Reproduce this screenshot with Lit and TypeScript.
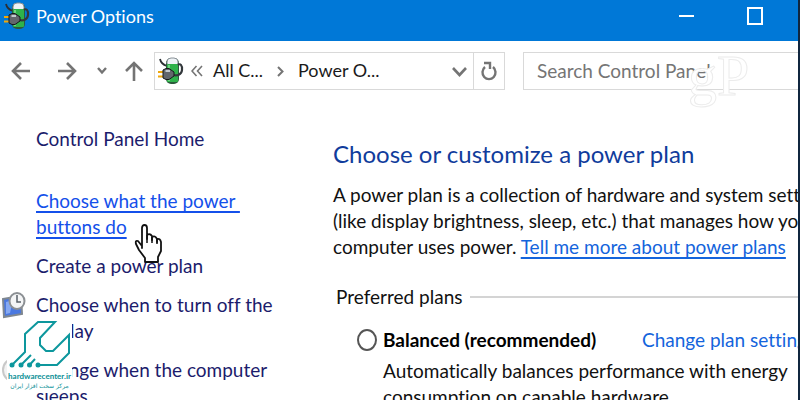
import { LitElement, html, css, svg } from "lit";
import { customElement } from "lit/decorators.js";

const battery = svg`
  <path d="M2 2Q3 7 9 9" stroke="#2b2f33" stroke-width="1.800" fill="none"/>
  <rect x="8" y="1" width="13" height="26" rx="5" fill="#2c5a3c"/>
  <rect x="9" y="1" width="11" height="9" rx="4" fill="#eef3f6" stroke="#8a9298"/>
  <rect x="9" y="7" width="11" height="18" rx="1" fill="#2eb24a"/>
  <path d="M11 8V24" stroke="#86dd95" stroke-width="1.500"/>
  <path d="M15 18C19 19 23.500 18 24 13C24.500 8 22 6 20 8" stroke="#33383c" stroke-width="2.200" fill="none"/>
  <path d="M0 15H6M0 19.500H6" stroke="#f0a80c" stroke-width="2"/>
  <path d="M5 13L8 11.500H11L16 15V19L11 22.500H8L5 21Z" fill="#62666c" stroke="#15181a"/>
  <path d="M7.500 14H12" stroke="#c5cad0" stroke-width="2"/>`;

@customElement("app-root")
export class AppRoot extends LitElement {
  static styles = css`
    :host {
      display: block;
      font: 19px/26px Lato, "Open Sans", sans-serif;
      font-variant-ligatures: none;
      color: #111;
    }
    * { box-sizing: border-box; }
    .window {
      position: relative;
      height: 100vh;
      overflow: hidden;
      background: #fff;
      border-right: 2px solid #10263f;
    }
    button {
      border: 0;
      padding: 0;
      background: none;
      font: inherit;
      color: inherit;
      display: flex;
      align-items: center;
    }
    svg { display: block; }
    .titlebar {
      display: flex;
      align-items: center;
      height: 41px;
      padding: 0 35px 10px 4px;
      background: #0078d7;
      color: #fff;
    }
    .titlebar h1 {
      flex: 1;
      margin: 0;
      padding-left: 6px;
      font-size: 18px;
      font-weight: 400;
    }
    .controls { display: flex; gap: 52px; }
    .toolbar {
      display: flex;
      align-items: center;
      padding: 11px 0 0 11px;
      color: #747474;
    }
    .arrows { display: flex; align-items: center; width: 143px; gap: 25px; }
    .arrows .recent { margin: 0 -7px 0 -6px; }
    .address {
      display: flex;
      align-items: center;
      width: 351px;
      height: 38px;
      padding-left: 3px;
      border: 1px solid #d9d9d9;
    }
    .crumb { color: #1a1a1a; font-size: 18px; padding-bottom: 3px; }
    .first { width: 64px; margin-left: 10px; }
    .second { flex: 1; margin-left: 14px; }
    .chevrons { margin-left: 7px; }
    .refresh {
      width: 31px;
      height: 36px;
      margin-left: 6px;
      justify-content: center;
      border-left: 1px solid #d9d9d9;
    }
    .search {
      flex: 1;
      min-width: 0;
      height: 38px;
      margin-left: 18px;
      padding: 0 0 2px 13px;
      border: 1px solid #d9d9d9;
      border-right: 0;
      border-radius: 0;
      background: #fff;
      font: inherit;
      outline: 0;
    }
    .search::placeholder { color: #757575; opacity: 1; }
    .watermark {
      position: absolute;
      left: 688px;
      top: 47px;
      font: 58px/58px "Liberation Serif", serif;
      color: #fff;
      -webkit-text-stroke: 1px #ececec;
      pointer-events: none;
    }
    .body { display: flex; padding-top: 36px; }
    .side {
      flex: none;
      width: 333px;
      padding-left: 36px;
      display: flex;
      flex-direction: column;
      align-items: flex-start;
      gap: 13px;
    }
    .side a { color: #1c1c6c; text-decoration: none; white-space: nowrap; }
    .side .home { margin-bottom: 23px; }
    .side .hot {
      color: #1450ea;
      text-decoration: underline;
      text-decoration-thickness: 2px;
      text-underline-offset: 3px;
    }
    .task { position: relative; }
    .task svg { position: absolute; right: 100%; top: 0; margin-right: 10px; }
    main { flex: 1; min-width: 0; padding-top: 12px; white-space: nowrap; }
    h2 { margin: 0 0 12px; font-size: 24px; line-height: 32px; font-weight: 400; color: #103c9c; }
    p { margin: 0; }
    .blue { color: #1464dc; text-decoration: none; }
    .more {
      text-decoration: underline;
      text-decoration-thickness: 2px;
      text-underline-offset: 3px;
    }
    .plans { padding-left: 3px; }
    .legend { display: flex; align-items: center; gap: 8px; margin: 24px 0 17px; }
    .legend::after { content: ""; flex: 1; height: 2px; background: #d4d4d4; }
    .plan { display: grid; grid-template-columns: 26px 259px 1fr; padding-left: 21px; align-items: center; }
    .plan input {
      appearance: none;
      width: 20px;
      height: 22px;
      margin: 0;
      border: 2px solid #555;
      border-radius: 50%;
      background: #fff;
    }
    .plan label { font-weight: 700; color: #000; }
    .plan p { grid-column: 2 / -1; margin-top: 5px; }
    .cursor { position: absolute; left: 134px; top: 224px; }
    .brand {
      position: absolute;
      left: 7px;
      top: 318px;
      width: 65px;
      height: 75px;
      background: #fff;
      color: #0a8f96;
      text-align: center;
      white-space: nowrap;
    }
    .brand div { font: 700 8px/8px Lato, sans-serif; }
    .brand .fa { font: 6px/12px "DejaVu Sans", sans-serif; font-variant-ligatures: normal; }
  `;

  render() {
    return html`
      <div class="window">
        <header class="titlebar">
          <svg width="26" height="28" viewBox="0 0 26 28">${battery}</svg>
          <h1>Power Options</h1>
          <div class="controls">
            <button aria-label="Minimize">
              <svg width="17" height="18" viewBox="0 0 17 18"><path d="M1 9H16" stroke="#fff" stroke-width="2"/></svg>
            </button>
            <button aria-label="Maximize">
              <svg width="16" height="18" viewBox="0 0 16 18"><rect x="1" y="1" width="14" height="16" fill="none" stroke="#fff" stroke-width="2"/></svg>
            </button>
          </div>
        </header>

        <nav class="toolbar" aria-label="Navigation">
          <div class="arrows">
            <button aria-label="Back">
              <svg width="21" height="20" viewBox="0 0 21 20" fill="none" stroke="currentColor" stroke-width="2.600"><path d="M19 10H2M10 2L2 10L10 18"/></svg>
            </button>
            <button aria-label="Forward">
              <svg width="21" height="20" viewBox="0 0 21 20" fill="none" stroke="currentColor" stroke-width="2.600"><path d="M1 10H18M10 2L18 10L10 18"/></svg>
            </button>
            <button class="recent" aria-label="Recent locations">
              <svg width="10" height="8" viewBox="0 0 10 8" fill="none" stroke="currentColor" stroke-width="2.400"><path d="M1 1L5 5.500L9 1"/></svg>
            </button>
            <button aria-label="Up">
              <svg width="18" height="21" viewBox="0 0 18 21" fill="none" stroke="currentColor" stroke-width="2.600"><path d="M9 20V2M1 10L9 2L17 10"/></svg>
            </button>
          </div>
          <div class="address">
            <svg width="26" height="30" viewBox="0 0 26 28">${battery}</svg>
            <svg class="chevrons" width="12" height="12" viewBox="0 0 12 12" fill="none" stroke="currentColor" stroke-width="1.600"><path d="M5.500 1L1 6L5.500 11M11 1L6.500 6L11 11"/></svg>
            <button class="crumb first">All C...</button>
            <svg width="7" height="11" viewBox="0 0 7 11" fill="none" stroke="currentColor" stroke-width="2"><path d="M1 1L5.500 5.500L1 10"/></svg>
            <button class="crumb second">Power O...</button>
            <button aria-label="Previous locations">
              <svg width="15" height="11" viewBox="0 0 15 11" fill="none" stroke="currentColor" stroke-width="2.600"><path d="M1 2L7.500 9L14 2"/></svg>
            </button>
            <button class="refresh" aria-label="Refresh">
              <svg width="16" height="20" viewBox="0 0 16 20" fill="none" stroke="currentColor" stroke-width="2.400"><path d="M4 6A6.500 6.800 0 1 0 12 6M3 2H9V8"/></svg>
            </button>
          </div>
          <input class="search" type="search" placeholder="Search Control Panel" aria-label="Search Control Panel" />
        </nav>

        <div class="body">
          <nav class="side" aria-label="Tasks">
            <a class="home" href="#home">Control Panel Home</a>
            <a class="hot" href="#buttons">Choose what the power&nbsp;<br />buttons do</a>
            <a href="#create">Create a power plan</a>
            <a class="task" href="#display">
              <svg width="24" height="27" viewBox="0 0 24 27">
                <path d="M1 7L19 4L20 22L2 25Z" fill="#4a78e0" stroke="#7f8790" stroke-width="2"/>
                <path d="M4 10L11 8L8 21L4 22Z" fill="#86a9f2"/>
                <ellipse cx="15" cy="9" rx="7.500" ry="8" fill="#f4f5f6" stroke="#8c9094" stroke-width="2"/>
                <path d="M15 3V10H19" fill="none" stroke="#59616a" stroke-width="1.500"/>
              </svg>Choose when to turn off the<br />display</a>
            <a class="task" href="#sleep">
              <svg width="24" height="27" viewBox="0 0 24 27"><ellipse cx="11" cy="13" rx="10" ry="11" fill="#f3f3f3" stroke="#c9c9c9" stroke-width="2"/></svg>Change when the computer<br />sleeps</a>
          </nav>

          <main>
            <h2>Choose or customize a power plan</h2>
            <p>
              A power plan is a collection of hardware and system settings<br />
              (like display brightness, sleep, etc.) that manages how your<br />
              computer uses power. <a class="blue more" href="#more">Tell me more about power plans</a>
            </p>
            <section class="plans">
              <div class="legend">Preferred plans</div>
              <div class="plan">
                <input type="radio" id="balanced" name="plan" />
                <label for="balanced">Balanced (recommended)</label>
                <a class="blue" href="#settings">Change plan settings</a>
                <p>Automatically balances performance with energy<br />consumption on capable hardware.</p>
              </div>
            </section>
          </main>
        </div>

        <div class="watermark" aria-hidden="true">gP</div>

        <svg class="cursor" width="29" height="40" viewBox="0 0 29 40">
          <path d="M8 24V4Q8 1 10.500 1Q13 1 13 4V15V11Q16 9 18 12V16V13Q21 11 23 15V18V15Q26 14 27 18V27L24 33V38H11V34L5 26L2 20Q1 16 4 17L8 22Z" fill="#fff" stroke="#111" stroke-width="1.800" stroke-linejoin="round"/>
          <path d="M13 11V19M18 13V19M23 15V20" stroke="#111" stroke-width="1.500"/>
        </svg>

        <div class="brand">
          <svg width="65" height="54" viewBox="0 0 65 54" fill="none" stroke="#0d979d" stroke-width="2">
            <path d="M5 47L18 34V16L31 4H48L33 20V27L39 33H46L62 17V35L50 47H31"/>
            <path d="M14 47L24 37M22.500 47L28 41"/>
            <g fill="#0d979d" stroke="none"><circle cx="5" cy="47" r="2.500"/><circle cx="14" cy="47" r="2.500"/><circle cx="22.500" cy="47" r="2.500"/><circle cx="31" cy="47" r="2.500"/></g>
          </svg>
          <div>hardwarecenter.ir</div>
          <div class="fa" lang="fa" dir="rtl">مرکز سخت افزار ایران</div>
        </div>
      </div>
    `;
  }
}
